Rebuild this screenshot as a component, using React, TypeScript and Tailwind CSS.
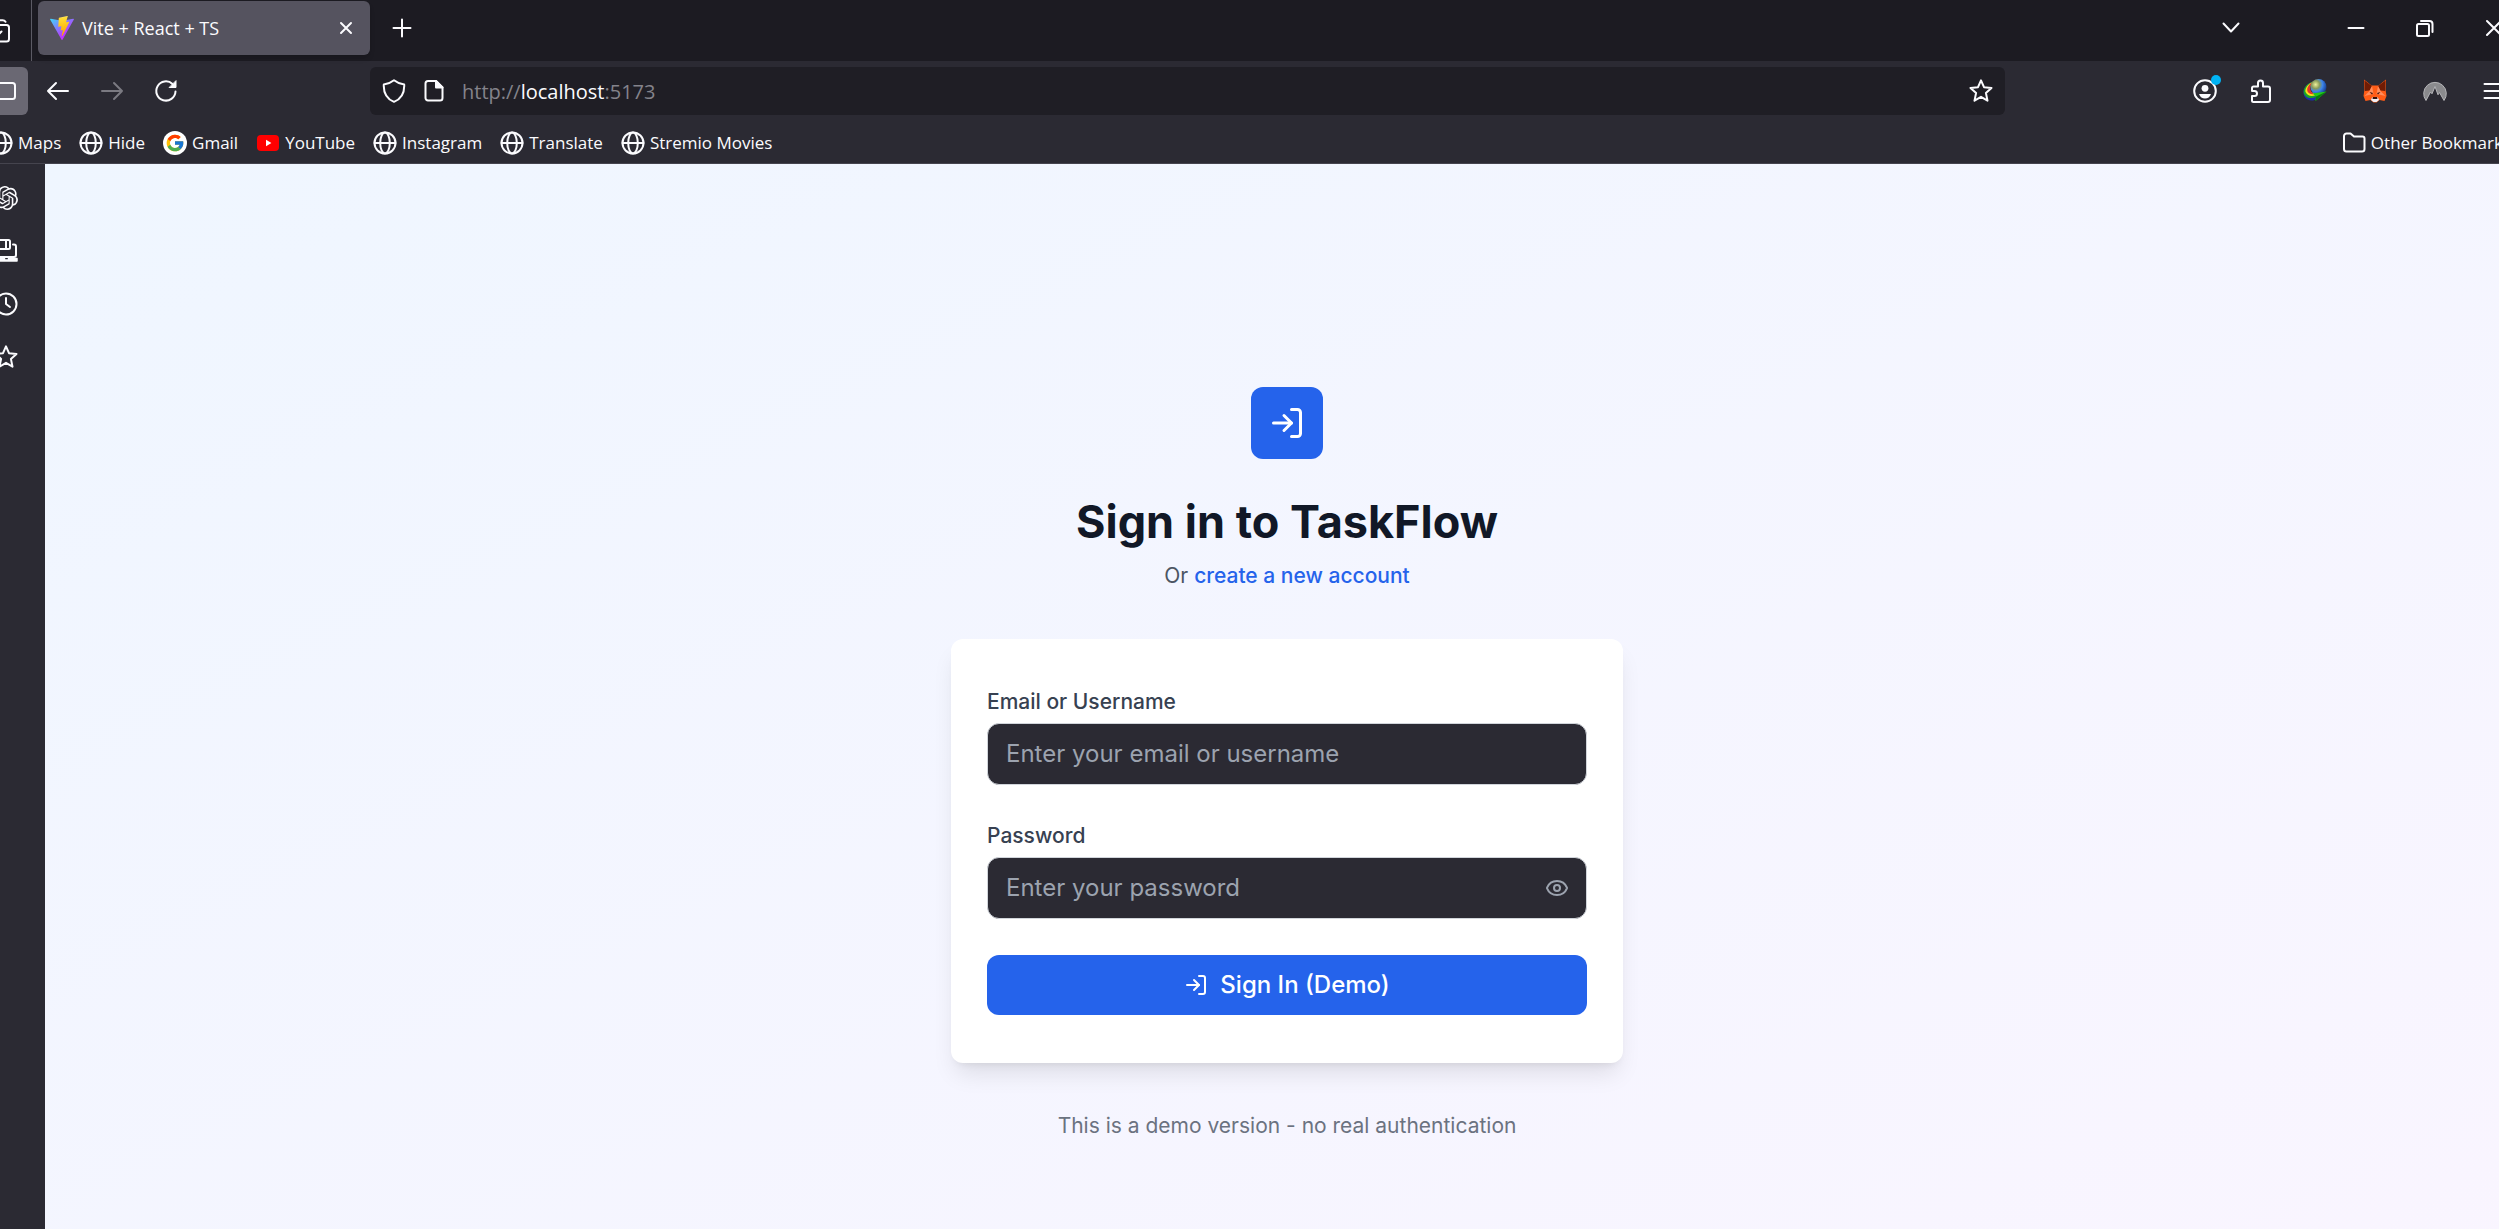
import React from "react";
import { Eye, LogIn } from "lucide-react";
import { SiOpenai } from "react-icons/si";
import { FcGoogle } from "react-icons/fc";

type IconProps = { className?: string; children: React.ReactNode; viewBox?: string };

function Line({ className = "size-6", children, viewBox = "0 0 24 24" }: IconProps) {
  return (
    <svg
      className={className}
      viewBox={viewBox}
      fill="none"
      stroke="currentColor"
      strokeWidth="2"
      strokeLinecap="round"
      strokeLinejoin="round"
      aria-hidden="true"
    >
      {children}
    </svg>
  );
}

function ViteLogo() {
  return (
    <svg viewBox="0 0 256 257" className="size-6 shrink-0" aria-hidden="true">
      <defs>
        <linearGradient id="viteBody" x1="-.8%" x2="57.6%" y1="7.7%" y2="78.4%">
          <stop offset="0%" stopColor="#41D1FF" />
          <stop offset="100%" stopColor="#BD34FE" />
        </linearGradient>
        <linearGradient id="viteBolt" x1="43.4%" x2="50.3%" y1="2.2%" y2="89%">
          <stop offset="0%" stopColor="#FFEA83" />
          <stop offset="8.3%" stopColor="#FFDD35" />
          <stop offset="100%" stopColor="#FFA800" />
        </linearGradient>
      </defs>
      <path
        fill="url(#viteBody)"
        d="M255.153 37.938 134.897 252.976c-2.483 4.44-8.862 4.466-11.382.048L.875 37.958c-2.746-4.814 1.371-10.646 6.827-9.67l120.385 21.517a6.537 6.537 0 0 0 2.322-.004l117.867-21.483c5.438-.991 9.574 4.796 6.877 9.62Z"
      />
      <path
        fill="url(#viteBolt)"
        d="M185.432.063 96.44 17.501a3.268 3.268 0 0 0-2.634 3.014l-5.474 92.456a3.268 3.268 0 0 0 3.997 3.378l24.777-5.718c2.318-.535 4.413 1.507 3.936 3.838l-7.361 36.047c-.495 2.426 1.782 4.5 4.151 3.78l15.304-4.649c2.372-.72 4.652 1.36 4.15 3.788l-11.698 56.621c-.732 3.542 3.979 5.473 5.943 2.437l1.313-2.028 72.516-144.72c1.215-2.423-.88-5.186-3.54-4.672l-25.505 4.922c-2.396.462-4.435-1.77-3.759-4.114l16.646-57.705c.677-2.35-1.37-4.583-3.769-4.113Z"
      />
    </svg>
  );
}

const Globe = () => (
  <Line className="size-6 shrink-0">
    <circle cx="12" cy="12" r="10.5" />
    <ellipse cx="12" cy="12" rx="4.8" ry="10.5" />
    <path d="M1.5 12h21" />
  </Line>
);

const GoogleBadge = () => (
  <span className="flex size-6 shrink-0 items-center justify-center rounded-full bg-white">
    <FcGoogle className="size-5" />
  </span>
);

const YouTubeBadge = () => (
  <svg viewBox="0 0 24 24" className="size-6 shrink-0" aria-hidden="true">
    <rect x="1" y="4" width="22" height="16" rx="4" fill="#ff0000" />
    <path d="M10 8.8v6.4l5.4-3.2z" fill="#fff" />
  </svg>
);

const Star = () => (
  <Line>
    <path d="M12 1.300l3 6.900 7.500.7-5.600 5 1.600 7.800-6.500-3.900-6.500 3.900 1.600-7.800-5.600-5 7.500-.7z" />
  </Line>
);

function Idm() {
  return (
    <svg viewBox="0 0 24 24" className="size-6" aria-hidden="true">
      <defs>
        <radialGradient id="idmGlobe" cx="32%" cy="35%" r="72%">
          <stop offset="0%" stopColor="#eef09a" />
          <stop offset="35%" stopColor="#8a9c5a" />
          <stop offset="60%" stopColor="#3f86ea" />
          <stop offset="100%" stopColor="#123a8c" />
        </radialGradient>
      </defs>
      <path d="M9 3C2.500 5-1.500 12 1.500 17.500 4 22 10 22.500 14 20L11 14C6 14 5.500 9 9 3z" fill="#1c2fae" />
      <path d="M9 3C3 5-.5 10.500 1 15c2 4.500 8 5 12 3l-2-4C6 14 5.500 9 9 3z" fill="#19a32b" />
      <path d="M9 3.200C5 5 1.500 9.500 2.500 13c2 4 5.500 4.500 9.500 3.500L11 14C6 14 5.500 9 9 3.200z" fill="#f5e11c" />
      <path d="M9 3.500C5.500 5.500 3.500 9.500 4.500 12.500 6 15 8.500 15.500 11 15 6.500 12.500 6.500 8 9 3.500z" fill="#e5352b" />
      <circle cx="15.500" cy="8" r="8" fill="url(#idmGlobe)" />
      <path d="M9.500 14.500L23.500 12.500 12.500 22l.5-4.500z" fill="#22cc18" />
      <path d="M12.500 22l.5-4.500 10.500-5z" fill="#087a12" />
    </svg>
  );
}

function Fox() {
  return (
    <svg viewBox="0 0 24 24" className="size-6" aria-hidden="true">
      <path d="M1 .5L8.500 6.500h7L23 .5l-.5 10 1 6.500-2 5-5-1-3 2.500h-3l-3-2.500-5 1L.5 17l1-6.500z" fill="#ff5c16" />
      <path d="M1.500 1.500L9 7l-2.500 4.500L2 12zM22.500 1.500L15 7l2.500 4.500L22 12z" fill="#701c04" />
      <path d="M9 7l1.500 8-9 2 5-5zM15 7l-1.500 8 9 2-5-5z" fill="#ff8d5d" />
      <path d="M6.500 13l3.500 1-1 1.500zM17.500 13L14 14l1 1.500z" fill="#3a1208" />
      <path d="M9 18.500h6l1 2.500-2.500 2h-3L8 21z" fill="#f0f0f6" />
      <path d="M10 18h4l.5 2h-5z" fill="#3a1208" />
    </svg>
  );
}

function Mountain() {
  return (
    <svg viewBox="0 0 24 24" className="size-6" aria-hidden="true">
      <path
        d="M3 21.500A11.300 11.300 0 1 1 21 21.500L16.500 13.500l-1.500 2.300L12 7.500l-3 7.300-1.500-1.800z"
        fill="#8a8a8d"
        stroke="#b5b5b8"
        strokeWidth="1"
      />
    </svg>
  );
}

function BarButton({ label, className = "", children }: { label: string; className?: string; children: React.ReactNode }) {
  return (
    <button type="button" aria-label={label} className={`flex h-12 shrink-0 items-center justify-center rounded-md ${className}`}>
      {children}
    </button>
  );
}

function TabStrip() {
  return (
    <header className="flex h-[61px] items-start bg-[#1c1b22]">
      <div className="flex h-full w-[65px] shrink-0 items-center border-r border-[#5b5a64] pl-5">
        <BarButton label="Recent browsing">
          <Line>
            <rect x="0" y="6" width="22" height="16.500" rx="2.500" />
            <path d="M2 1.200h13.500a3.500 3.500 0 0 1 3 1.600M7 12.500l4 3.500 3.500-3.500" />
          </Line>
        </BarButton>
      </div>
      <div className="mt-px ml-1.5 flex h-[54px] w-[332px] items-center rounded-md bg-[#55535f] pr-3 pl-3 shadow-md">
        <ViteLogo />
        <span className="ml-2 flex-1 text-lg">Vite + React + TS</span>
        <button type="button" aria-label="Close tab" className="flex size-6 items-center justify-center">
          <Line>
            <path d="M7 7l10 10M17 7L7 17" />
          </Line>
        </button>
      </div>
      <BarButton label="New tab" className="mt-1 ml-2 w-12">
        <Line>
          <path d="M12 3.500v17M3.500 12h17" />
        </Line>
      </BarButton>
      <div className="mt-1 mr-px ml-auto flex items-center">
        <BarButton label="List all tabs" className="mr-[66px] w-12">
          <Line>
            <path d="M4.500 7.500l7.500 8 7.500-8" />
          </Line>
        </BarButton>
        <BarButton label="Minimize" className="w-[69px]">
          <Line>
            <path d="M4.500 12h15" />
          </Line>
        </BarButton>
        <BarButton label="Restore" className="w-[69px]">
          <Line>
            <rect x="4" y="8" width="12" height="12" rx="1.500" />
            <path d="M8 5h8.500a3 3 0 0 1 3 3V16" />
          </Line>
        </BarButton>
        <BarButton label="Close" className="w-[69px]">
          <Line>
            <path d="M5 5l14 14M19 5L5 19" />
          </Line>
        </BarButton>
      </div>
    </header>
  );
}

function NavBar() {
  return (
    <nav className="flex h-[60px] items-center pr-[10px] pl-[13px]" aria-label="Navigation">
      <BarButton label="Toggle sidebar" className="w-12 bg-[#6a6873]">
        <Line>
          <rect x="1" y="4" width="22" height="16" rx="2.500" />
          <path d="M5 4v16" />
        </Line>
      </BarButton>
      <BarButton label="Back" className="ml-1.5 w-12">
        <Line>
          <path d="M22 12H2M10 4l-8 8 8 8" />
        </Line>
      </BarButton>
      <BarButton label="Forward" className="ml-1.5 w-12 text-[#7b7a82]">
        <Line>
          <path d="M2 12h20M14 4l8 8-8 8" />
        </Line>
      </BarButton>
      <BarButton label="Reload" className="ml-1.5 w-12">
        <Line>
          <path d="M21.500 12.500A9.600 9.600 0 1 1 18.500 5" />
          <path d="M22 2v6.500h-6.500z" fill="currentColor" strokeWidth="1" />
        </Line>
      </BarButton>
      <div className="ml-[180px] flex h-12 flex-1 items-center gap-4 rounded-md bg-[#1f1e25] px-3">
        <Line className="size-6 shrink-0">
          <path d="M12 1.200c2.500 2 6 3.600 10.200 4.300.4 8-3.200 14.400-10.200 17.300C5 19.900 1.400 13.500 1.800 5.500 6 4.800 9.500 3.200 12 1.200z" />
        </Line>
        <Line className="size-6 shrink-0">
          <path d="M6.500 2H14l6.500 6.500V19a2.500 2.500 0 0 1-2.500 2.500H6A2.500 2.500 0 0 1 3.500 19V4.500A2.500 2.500 0 0 1 6 2z" />
          <path d="M14 2v6.500h6.500z" fill="currentColor" />
        </Line>
        <div className="flex-1 pt-0.5 text-xl text-[#84838b]">
          http://<span className="text-[#fbfbfe]">localhost</span>:5173
        </div>
        <button type="button" aria-label="Bookmark this page">
          <Star />
        </button>
      </div>
      <div className="ml-44 flex items-center">
        <BarButton label="Account" className="w-12">
          <span className="relative">
            <Line>
              <circle cx="12" cy="12" r="10.800" />
              <circle cx="12" cy="9.300" r="3.400" fill="currentColor" stroke="none" />
              <path d="M6 15h12c-1 3-3.300 4.500-6 4.500S7 18 6 15z" fill="currentColor" stroke="none" />
            </Line>
            <span className="absolute -top-1 -right-1 size-2.5 rounded-full bg-[#00b3f4]" />
          </span>
        </BarButton>
        <BarButton label="Extensions" className="ml-2 w-12">
          <Line>
            <path d="M4.500 7.500H9V4a2.500 2.500 0 0 1 5 0v3.500h5a2 2 0 0 1 2 2V21a2 2 0 0 1-2 2H4.500A1.500 1.500 0 0 1 3 21.500V17h2.500a2.500 2.500 0 0 0 0-5H3V9a1.500 1.500 0 0 1 1.500-1.500z" />
          </Line>
        </BarButton>
        <BarButton label="Download manager" className="w-[60px]">
          <Idm />
        </BarButton>
        <BarButton label="Wallet" className="w-[60px]">
          <Fox />
        </BarButton>
        <BarButton label="VPN" className="w-[60px]">
          <Mountain />
        </BarButton>
        <BarButton label="Menu" className="ml-1.5 w-12">
          <Line>
            <path d="M1.500 5h21M1.500 12h21M1.500 19h21" />
          </Line>
        </BarButton>
      </div>
    </nav>
  );
}

const bookmarks = [
  { name: "Maps", icon: <Globe /> },
  { name: "Hide", icon: <Globe /> },
  { name: "Gmail", icon: <GoogleBadge /> },
  { name: "YouTube", icon: <YouTubeBadge /> },
  { name: "Instagram", icon: <Globe /> },
  { name: "Translate", icon: <Globe /> },
  { name: "Stremio Movies", icon: <Globe /> },
];

function BookmarksBar() {
  return (
    <div className="flex h-[43px] items-center gap-[18px] border-b border-[#45444e] pt-px pr-[18px] pl-[22px] text-[17px]">
      {bookmarks.map((b) => (
        <a key={b.name} href="#" className="flex items-center gap-[5px]">
          {b.icon}
          {b.name}
        </a>
      ))}
      <a href="#" className="ml-auto flex items-center gap-[5px]">
        <Line className="size-6 shrink-0">
          <path d="M2 5a2.500 2.500 0 0 1 2.500-2.500h4L12 5.500h8.500A2 2 0 0 1 22.500 7.500V18a2.500 2.500 0 0 1-2.500 2.500H4.500A2.500 2.500 0 0 1 2 18z" />
        </Line>
        Other Bookmarks
      </a>
    </div>
  );
}

function Sidebar() {
  return (
    <aside className="flex w-[78px] shrink-0 flex-col items-center gap-[5px] pt-[10px]">
      <BarButton label="Chatbot" className="w-12">
        <SiOpenai className="size-6" />
      </BarButton>
      <BarButton label="Synced tabs" className="w-12">
        <Line>
          <rect x="3" y="1" width="13" height="9" rx="1.500" />
          <path d="M12 1v9M19 5.500h1a2 2 0 0 1 2 2V16a2 2 0 0 1-2 2H5a2 2 0 0 1-2-2v-2" />
          <path d="M1 19.500h9.500v1.500h4v-1.500H23V22H1z" fill="currentColor" strokeWidth="1.500" />
        </Line>
      </BarButton>
      <BarButton label="History" className="w-12">
        <Line>
          <circle cx="12" cy="12" r="10.500" />
          <path d="M12 6v6l4 3" />
        </Line>
      </BarButton>
      <BarButton label="Bookmarks" className="w-12">
        <Star />
      </BarButton>
    </aside>
  );
}

const inputClass =
  "block w-full rounded-xl border border-[#d1d5db] bg-[#2b2a33] px-[18px] py-3 text-2xl leading-9 text-white placeholder:text-[#9ca3af] focus:outline-none";

function SignIn() {
  return (
    <main className="flex min-h-[1200px] min-w-0 flex-1 items-center justify-center bg-[linear-gradient(to_bottom_right,#eff6ff,#faf5ff)] font-[Inter,sans-serif]">
      <div className="w-full max-w-2xl">
        <div className="mx-auto flex size-[72px] items-center justify-center rounded-xl bg-[#2563eb] text-white">
          <LogIn className="size-9" />
        </div>
        <h1 className="mt-9 text-center text-[45px] leading-[54px] font-bold text-[#111827]">Sign in to TaskFlow</h1>
        <p className="mt-3 text-center text-[21px] leading-[30px] text-[#4b5563]">
          Or{" "}
          <a href="#" className="font-medium text-[#2563eb]">
            create a new account
          </a>
        </p>
        <form
          className="mt-12 space-y-9 rounded-xl bg-white px-9 py-12 shadow-[0_15px_23px_-5px_rgba(0,0,0,0.1),0_6px_9px_-6px_rgba(0,0,0,0.1)]"
          onSubmit={(e) => e.preventDefault()}
        >
          <div>
            <label htmlFor="login" className="block text-[21px] leading-[30px] font-medium text-[#374151]">
              Email or Username
            </label>
            <input id="login" type="text" placeholder="Enter your email or username" className={`mt-1.5 ${inputClass}`} />
          </div>
          <div>
            <label htmlFor="password" className="block text-[21px] leading-[30px] font-medium text-[#374151]">
              Password
            </label>
            <div className="relative mt-1.5">
              <input id="password" type="password" placeholder="Enter your password" className={inputClass} />
              <button type="button" aria-label="Show password" className="absolute inset-y-0 right-0 flex items-center pr-[18px] text-[#9ca3af]">
                <Eye className="size-6" />
              </button>
            </div>
          </div>
          <button
            type="submit"
            className="flex w-full items-center justify-center gap-3 rounded-xl bg-[#2563eb] py-3 text-2xl leading-9 font-medium text-white"
          >
            <LogIn className="size-6" />
            Sign In (Demo)
          </button>
        </form>
        <p className="mt-12 text-center text-[21px] leading-[30px] text-[#6b7280]">
          This is a demo version - no real authentication
        </p>
      </div>
    </main>
  );
}

export default function App() {
  return (
    <div className="h-screen overflow-hidden bg-[#2b2a33] font-['Open_Sans',sans-serif] text-[#fbfbfe]">
      <div className="-mr-[30px] -ml-[33px]">
        <TabStrip />
        <NavBar />
        <BookmarksBar />
        <div className="flex">
          <Sidebar />
          <SignIn />
        </div>
      </div>
    </div>
  );
}
